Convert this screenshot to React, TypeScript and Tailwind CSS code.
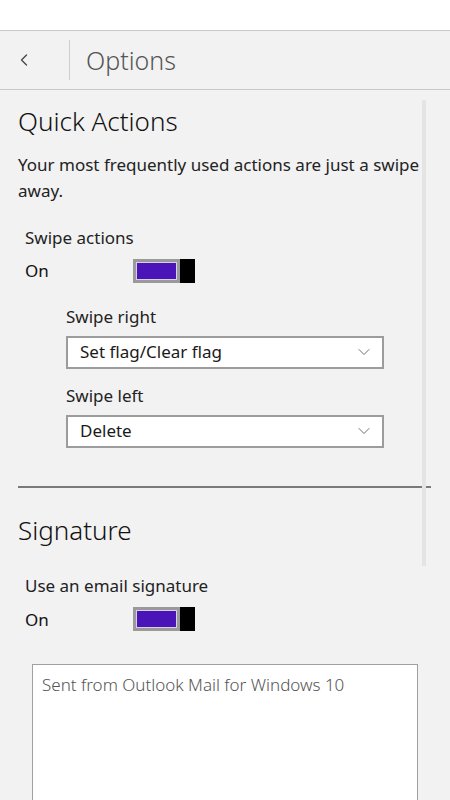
import { ChevronLeft, ChevronDown } from "lucide-react";

const Toggle = () => (
  <div className="flex h-[24px] w-[62px] items-stretch">
    <div className="flex-1 border-[3px] border-[#9a9a9a] bg-[#d8d0ea] p-[1px]">
      <div className="h-full w-full bg-[#4a14b8]" />
    </div>
    <div className="w-[15px] bg-black" />
  </div>
);

const Select = ({ value }: { value: string }) => (
  <div className="flex h-[33px] w-[318px] items-center justify-between border-2 border-[#9c9c9c] bg-white pl-[12px] pr-[8px]">
    <span className="text-[17px] text-[#1a1a1a]">{value}</span>
    <ChevronDown size={20} strokeWidth={1} className="text-[#555]" />
  </div>
);

export default function App() {
  return (
    <div
      className="h-[800px] w-[450px] overflow-hidden bg-[#f2f2f2]"
      style={{ fontFamily: '"Noto Sans", "Open Sans", sans-serif' }}
    >
      <div className="h-[30px] bg-white" />
      <div className="flex h-[60px] items-center border-y border-[#c8c8c8]">
        <div className="flex w-[69px] justify-center pr-[22px]">
          <ChevronLeft size={20} strokeWidth={1.5} className="text-[#444]" />
        </div>
        <div className="h-[40px] w-px bg-[#cfcfcf]" />
        <h1 className="pl-[16px] pt-[2px] text-[25px] font-light text-[#555]">Options</h1>
      </div>

      <div className="relative">
        {/* scrollbar */}
        <div className="absolute left-[422px] top-[10px] h-[466px] w-[4px] bg-[#e4e4e4]" />

        <div className="pl-[18px] pr-[19px]">
          <h2 className="pt-[13px] text-[26px] font-light leading-[36px] text-[#111]">Quick Actions</h2>
          <p className="mt-[13px] text-[17px] leading-[26px] text-[#222]">
            Your most frequently used actions are just a swipe away.
          </p>

          <div className="pl-[7px]">
            <p className="mt-[21px] text-[17px] leading-[26px] text-[#222]">Swipe actions</p>
            <div className="mt-[7px] flex items-center">
              <span className="w-[108px] text-[17px] text-[#111]">On</span>
              <Toggle />
            </div>
          </div>

          <div className="pl-[48px]">
            <p className="mt-[20px] text-[17px] leading-[26px] text-[#222]">Swipe right</p>
            <div className="mt-[6px]">
              <Select value="Set flag/Clear flag" />
            </div>
            <p className="mt-[14px] text-[17px] leading-[26px] text-[#222]">Swipe left</p>
            <div className="mt-[6px]">
              <Select value="Delete" />
            </div>
          </div>

          <div className="mt-[38px] h-[2px] w-[413px] bg-[#7a7a7a]" />

          <h2 className="mt-[24px] text-[26px] font-light leading-[36px] text-[#111]">Signature</h2>

          <div className="pl-[7px]">
            <p className="mt-[25px] text-[17px] leading-[26px] text-[#222]">Use an email signature</p>
            <div className="mt-[8px] flex items-center">
              <span className="w-[108px] text-[17px] text-[#111]">On</span>
              <Toggle />
            </div>
          </div>

          <div className="ml-[14px] mt-[32px] h-[160px] w-[386px] border border-[#a0a0a0] bg-white px-[9px] pt-[7px]">
            <p className="text-[17px] font-light text-[#555]">Sent from Outlook Mail for Windows 10</p>
          </div>
        </div>
      </div>
    </div>
  );
}
